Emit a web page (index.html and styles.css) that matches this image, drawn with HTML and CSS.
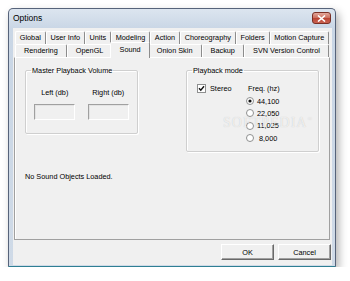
FILE: index.html
```html
<!DOCTYPE html>
<html lang="en">
<head>
  <meta charset="UTF-8">
  <title>Options</title>
  <link rel="stylesheet" href="styles.css">
</head>
<body>
  <div class="window">
    <div class="titlebar">
      <span class="title">Options</span>
      <span class="close">
        <svg width="9" height="7" viewBox="0 0 9 7"><path d="M1 0.5 L8 6.5 M8 0.5 L1 6.5" stroke="#fff" stroke-width="1.6"/></svg>
      </span>
    </div>

    <div class="client">
      <div class="tabrow">
        <span class="tab">Global</span>
        <span class="tab">User Info</span>
        <span class="tab">Units</span>
        <span class="tab">Modeling</span>
        <span class="tab">Action</span>
        <span class="tab">Choreography</span>
        <span class="tab">Folders</span>
        <span class="tab">Motion Capture</span>
      </div>
      <div class="tabrow">
        <span class="tab">Rendering</span>
        <span class="tab">OpenGL</span>
        <span class="tab active">Sound</span>
        <span class="tab">Onion Skin</span>
        <span class="tab">Backup</span>
        <span class="tab">SVN Version Control</span>
      </div>

      <div class="panel">
        <div class="groups">
          <fieldset class="group volume">
            <legend>Master Playback Volume</legend>
            <div class="vol-cols">
              <div class="vol-col">
                <span>Left (db)</span>
                <span class="edit"></span>
              </div>
              <div class="vol-col">
                <span>Right (db)</span>
                <span class="edit"></span>
              </div>
            </div>
          </fieldset>

          <fieldset class="group mode">
            <legend>Playback mode</legend>
            <div class="mode-grid">
              <label class="check">
                <svg width="9" height="9" viewBox="0 0 9 9">
                  <rect x="0.5" y="0.5" width="8" height="8" fill="#fff" stroke="#8e8f8f"/>
                  <path d="M2 4.2 L3.8 6.2 L7 2.2" fill="none" stroke="#111" stroke-width="1.4"/>
                </svg>
                Stereo
              </label>
              <div class="freq">
                <span class="freq-label">Freq. (hz)</span>
                <label class="radio">
                  <svg width="8" height="8" viewBox="0 0 8 8"><circle cx="4" cy="4" r="3.5" fill="#fff" stroke="#8e8f8f"/><circle cx="4" cy="4" r="1.6" fill="#111"/></svg>
                  44,100
                </label>
                <label class="radio">
                  <svg width="8" height="8" viewBox="0 0 8 8"><circle cx="4" cy="4" r="3.5" fill="#fff" stroke="#8e8f8f"/></svg>
                  22,050
                </label>
                <label class="radio">
                  <svg width="8" height="8" viewBox="0 0 8 8"><circle cx="4" cy="4" r="3.5" fill="#fff" stroke="#8e8f8f"/></svg>
                  11,025
                </label>
                <label class="radio">
                  <svg width="8" height="8" viewBox="0 0 8 8"><circle cx="4" cy="4" r="3.5" fill="#fff" stroke="#8e8f8f"/></svg>
                  &nbsp;8,000
                </label>
              </div>
            </div>
          </fieldset>
        </div>

        <p class="status">No Sound Objects Loaded.</p>

        <div class="watermark">SOFTPEDIA<sup>®</sup></div>
      </div>

      <div class="buttons">
        <button class="btn default">OK</button>
        <button class="btn">Cancel</button>
      </div>
    </div>
  </div>
</body>
</html>
```

FILE: styles.css
```css
body {
  margin: 0;
  background: #fff;
  font-family: "Liberation Sans", Arial, sans-serif;
  font-size: 7.3px;
  color: #000;
}

.window {
  margin: 8px 0 0 8px;
  width: 328px;
  height: 259px;
  box-sizing: border-box;
  padding: 0 3px 1px 4px;
  display: flex;
  flex-direction: column;
  border: 1px solid #56637a;
  border-bottom-color: #2f7f93;
  border-radius: 5px 5px 1px 1px;
  background: linear-gradient(#dce5ef, #c9d6e5 20px, #cfdae7);
  box-shadow: 3px 4px 8px rgba(0, 0, 0, 0.3);
}

.titlebar {
  height: 19px;
  display: flex;
  justify-content: space-between;
  align-items: flex-start;
}

.title {
  font-size: 8.5px;
  line-height: 19px;
}

.close {
  margin: 3px 1px 0 0;
  width: 19px;
  height: 12px;
  box-sizing: border-box;
  display: flex;
  align-items: center;
  justify-content: center;
  border: 1px solid #7a3026;
  border-radius: 3px;
  background: linear-gradient(#e3a89c, #cd7262 45%, #bb4636 55%, #c96150);
}

.client {
  flex: 1;
  background: #f0f0f0;
  padding-top: 3px;
  display: flex;
  flex-direction: column;
}

.tabrow {
  display: flex;
  height: 13px;
  margin: 0 3px 0 2px;
}

.tab {
  flex: auto;
  text-align: center;
  line-height: 12px;
  box-sizing: border-box;
  border-top: 1px solid #fff;
  border-left: 1px solid #fff;
  border-right: 1px solid #8c8c8c;
  border-radius: 2px 2px 0 0;
  white-space: nowrap;
}

.tab.active {
  position: relative;
  z-index: 1;
  height: 16px;
  margin: -2px -2px -1px;
  line-height: 13px;
  background: #f0f0f0;
}

.panel {
  position: relative;
  height: 183px;
  box-sizing: border-box;
  margin: 0 2px 0 1px;
  padding: 8px 10px 0;
  border: 1px solid #a0a0a0;
  border-top-color: #fff;
  box-shadow: inset 1px 0 #fff;
}

.groups {
  display: flex;
  justify-content: space-between;
  align-items: flex-start;
}

.group {
  margin: 0;
  min-width: 0;
  padding: 0;
  box-sizing: border-box;
  border: 1px solid #cfcfcf;
  border-radius: 2px;
  box-shadow: inset 1px 1px #fff, 1px 1px #fff;
}

.group legend {
  padding: 0 1px;
  margin-left: 4px;
  line-height: 9px;
}

.volume {
  width: 113px;
  height: 68px;
  padding: 13px 8px 0;
}

.volume legend {
  margin-left: -3px;
}

.vol-cols {
  display: flex;
  gap: 12px;
}

.vol-col {
  width: 42px;
  display: flex;
  flex-direction: column;
  align-items: center;
  gap: 7px;
  line-height: 9px;
}

.edit {
  width: 41px;
  height: 16px;
  box-sizing: border-box;
  border: 1px solid #fff;
  border-top-color: #a0a0a0;
  border-left-color: #a0a0a0;
  box-shadow: inset 1px 1px #e3e3e3;
}

.mode {
  width: 133px;
  height: 86px;
  padding: 9px 0 0 10px;
}

.mode legend {
  margin-left: -5px;
}

.mode-grid {
  display: grid;
  grid-template-columns: 49px auto;
  line-height: 9px;
}

.check {
  display: flex;
  align-items: center;
  gap: 4px;
  height: 9px;
}

.freq {
  display: flex;
  flex-direction: column;
}

.freq-label {
  margin: 0 0 2px 2px;
}

.radio {
  display: flex;
  align-items: center;
  gap: 3px;
  height: 12.3px;
}

.status {
  margin: 20px 0 0;
  line-height: 9px;
}

.watermark {
  position: absolute;
  left: 208px;
  top: 54px;
  font-family: "Liberation Serif", serif;
  font-size: 14px;
  letter-spacing: 1px;
  line-height: 14px;
  color: rgba(255, 255, 255, 0.7);
  text-shadow: 0 0 1px rgba(0, 0, 0, 0.2);
}

.watermark sup {
  font-size: 6px;
}

.buttons {
  display: flex;
  justify-content: flex-end;
  gap: 4px;
  margin: 4px 1px 0 0;
}

.btn {
  width: 53px;
  height: 16px;
  padding: 0;
  font: inherit;
  background: #f0f0f0;
  border: 1px solid #fff;
  border-right-color: #696969;
  border-bottom-color: #696969;
  box-shadow: inset -1px -1px #a0a0a0;
}
```
